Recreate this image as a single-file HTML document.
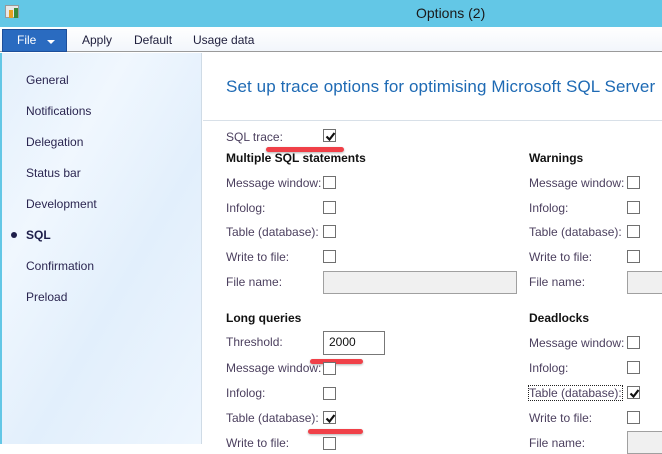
<!DOCTYPE html>
<html><head><style>
*{margin:0;padding:0;box-sizing:border-box}
body{width:662px;height:444px;overflow:hidden;position:relative;background:#fff;font-family:"Liberation Sans",sans-serif;font-size:12px;color:#4a3d55}
.a{position:absolute;white-space:nowrap}
.lbl{position:absolute;white-space:nowrap;color:#4b3f5e;font-size:12px;line-height:14px}
.h{position:absolute;white-space:nowrap;font-weight:bold;color:#111;font-size:12px;line-height:14px}
.cb{position:absolute;width:13px;height:13px;border:1px solid #707070;background:#fff}
.cb svg{position:absolute;left:1px;top:1px}
.nav{position:absolute;left:26px;font-size:12px;color:#2a2550}
.red{position:absolute;height:5px;background:#f04048;border-radius:3px;box-shadow:0 1px 2px rgba(0,0,0,.3)}
</style></head><body>
<div class="a" style="left:0;top:0;width:662px;height:27px;background:#63c7e6"></div>
<div class="a" style="left:5px;top:5px;width:14px;height:13px;background:#e8e8e8;border:1px solid #999"></div>
<div class="a" style="left:9px;top:10px;width:4px;height:8px;background:#e8a020"></div>
<div class="a" style="left:14px;top:8px;width:4px;height:10px;background:#3a8a3a"></div>
<div class="a" style="left:416px;top:5px;font-size:14px;color:#1a1a1a">Options (2)</div>
<div class="a" style="left:0;top:27px;width:662px;height:25px;background:linear-gradient(#fff,#f2f6fb);border-bottom:1px solid #9a9a9a"></div>
<div class="a" style="left:2px;top:29px;width:65px;height:23px;background:#2a6bc0;border:1px solid #1d4f9a"></div>
<div class="a" style="left:17px;top:33px;color:#fff;font-size:12px">File</div>
<div class="a" style="left:47px;top:40px;width:0;height:0;border-left:4px solid transparent;border-right:4px solid transparent;border-top:4px solid #fff"></div>
<div class="a" style="left:82px;top:33px;color:#1e1e3c">Apply</div>
<div class="a" style="left:134px;top:33px;color:#1e1e3c">Default</div>
<div class="a" style="left:193px;top:33px;color:#1e1e3c">Usage data</div>
<div class="a" style="left:0;top:53px;width:2px;height:391px;background:#63c7e6"></div>
<div class="a" style="left:2px;top:53px;width:200px;height:391px;background:linear-gradient(120deg,#e4f0fc,#f0f7fe 30%,#e2effc 60%,#eef6fe);border-right:1px solid #cfdbe6"></div>
<div class="nav" style="top:73px">General</div>
<div class="nav" style="top:104px">Notifications</div>
<div class="nav" style="top:135px">Delegation</div>
<div class="nav" style="top:166px">Status bar</div>
<div class="nav" style="top:197px">Development</div>
<div class="a" style="left:11px;top:232px;width:6px;height:6px;border-radius:3px;background:#1e1e4a"></div>
<div class="nav" style="top:228px;font-weight:bold;color:#1e1e4a">SQL</div>
<div class="nav" style="top:259px">Confirmation</div>
<div class="nav" style="top:290px">Preload</div>
<div class="a" style="left:203px;top:120px;width:459px;height:1px;background:#d8e0e8"></div>
<div class="a" style="left:226px;top:77px;font-size:17px;color:#1e6ab4;letter-spacing:0.1px">Set up trace options for optimising Microsoft SQL Server</div>

<div class="lbl" style="left:226px;top:130px">SQL trace:</div>
<div class="cb" style="left:323px;top:129px"><svg width="11" height="11"><path d="M1.5 5.5 L4.5 8.5 L9.5 2" stroke="#111" stroke-width="2.2" fill="none"/></svg></div>
<div class="red" style="left:266px;top:147px;width:78px"></div>

<div class="h" style="left:226px;top:151px">Multiple SQL statements</div>
<div class="lbl" style="left:226px;top:176px">Message window:</div><div class="cb" style="left:323px;top:176px"></div>
<div class="lbl" style="left:226px;top:201px">Infolog:</div><div class="cb" style="left:323px;top:201px"></div>
<div class="lbl" style="left:226px;top:225px">Table (database):</div><div class="cb" style="left:323px;top:225px"></div>
<div class="lbl" style="left:226px;top:250px">Write to file:</div><div class="cb" style="left:323px;top:250px"></div>
<div class="lbl" style="left:226px;top:275px">File name:</div>
<div class="a" style="left:323px;top:271px;width:194px;height:23px;background:#f0f0f0;border:1px solid #a0a0a0"></div>

<div class="h" style="left:226px;top:311px">Long queries</div>
<div class="lbl" style="left:226px;top:335px">Threshold:</div>
<div class="a" style="left:323px;top:331px;width:62px;height:24px;border:1px solid #777;background:#fff"></div>
<div class="a" style="left:329px;top:335px;color:#111">2000</div>
<div class="red" style="left:310px;top:359px;width:53px"></div>
<div class="lbl" style="left:226px;top:361px">Message window:</div><div class="cb" style="left:323px;top:362px"></div>
<div class="lbl" style="left:226px;top:386px">Infolog:</div><div class="cb" style="left:323px;top:387px"></div>
<div class="lbl" style="left:226px;top:411px">Table (database):</div><div class="cb" style="left:323px;top:411px"><svg width="11" height="11"><path d="M1.5 5.5 L4.5 8.5 L9.5 2" stroke="#111" stroke-width="2.2" fill="none"/></svg></div>
<div class="red" style="left:308px;top:429px;width:55px"></div>
<div class="lbl" style="left:226px;top:436px">Write to file:</div><div class="cb" style="left:323px;top:437px"></div>

<div class="h" style="left:529px;top:151px">Warnings</div>
<div class="lbl" style="left:529px;top:176px">Message window:</div><div class="cb" style="left:627px;top:176px"></div>
<div class="lbl" style="left:529px;top:201px">Infolog:</div><div class="cb" style="left:627px;top:201px"></div>
<div class="lbl" style="left:529px;top:225px">Table (database):</div><div class="cb" style="left:627px;top:225px"></div>
<div class="lbl" style="left:529px;top:250px">Write to file:</div><div class="cb" style="left:627px;top:250px"></div>
<div class="lbl" style="left:529px;top:275px">File name:</div>
<div class="a" style="left:627px;top:271px;width:40px;height:23px;background:#f0f0f0;border:1px solid #a0a0a0"></div>

<div class="h" style="left:529px;top:311px">Deadlocks</div>
<div class="lbl" style="left:529px;top:336px">Message window:</div><div class="cb" style="left:627px;top:336px"></div>
<div class="lbl" style="left:529px;top:361px">Infolog:</div><div class="cb" style="left:627px;top:361px"></div>
<div class="lbl" style="left:529px;top:386px;outline:1px dotted #222">Table (database):</div><div class="cb" style="left:627px;top:386px"><svg width="11" height="11"><path d="M1.5 5.5 L4.5 8.5 L9.5 2" stroke="#111" stroke-width="2.2" fill="none"/></svg></div>
<div class="lbl" style="left:529px;top:411px">Write to file:</div><div class="cb" style="left:627px;top:411px"></div>
<div class="lbl" style="left:529px;top:436px">File name:</div>
<div class="a" style="left:627px;top:431px;width:40px;height:23px;background:#f0f0f0;border:1px solid #a0a0a0"></div>
</body></html>
